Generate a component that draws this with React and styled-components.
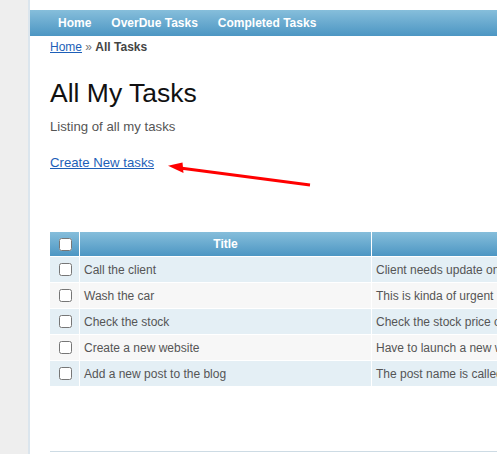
import React from "react";
import styled, { createGlobalStyle } from "styled-components";

const GlobalStyle = createGlobalStyle`
  html, body {
    margin: 0;
    padding: 0;
    overflow: hidden;
    background: #eeeeee;
    font-family: "Liberation Sans", Arial, sans-serif;
  }
`;

const Page = styled.div`
  position: relative;
  display: flex;
  width: 900px;
  min-height: 454px;
`;

const Sidebar = styled.div`
  width: 28px;
  flex: none;
  background: #eeeeee;
  border-right: 2px solid #dbe5ed;
`;

const Main = styled.div`
  flex: 1;
  background: #ffffff;
  padding-top: 10px;
`;

const NavBar = styled.nav`
  display: flex;
  height: 26px;
  padding-left: 18px;
  background: linear-gradient(to bottom, #86bedb, #4c96c3);
`;

const NavItem = styled.a`
  padding: 0 10px;
  line-height: 26px;
  color: #ffffff;
  font-weight: bold;
  font-size: 12px;
  text-decoration: none;
`;

const Content = styled.div`
  padding-left: 20px;
`;

const Breadcrumb = styled.div`
  margin-top: 4px;
  font-size: 12px;
  line-height: 14px;
  color: #777;
`;

const Link = styled.a`
  color: #1d5fb8;
  text-decoration: underline;
`;

const Current = styled.strong`
  color: #444;
`;

const Heading = styled.h1`
  margin: 24px 0 0;
  font-size: 26.5px;
  line-height: 30px;
  font-weight: normal;
  color: #111;
`;

const Lead = styled.p`
  margin: 11px 0 0;
  font-size: 13.2px;
  line-height: 15px;
  color: #555;
`;

const CreateLink = styled(Link)`
  display: inline-block;
  margin-top: 21px;
  font-size: 13.2px;
  line-height: 15px;
`;

const Table = styled.table`
  margin-top: 61px;
  border-collapse: separate;
  border-spacing: 0;
  font-size: 12px;
`;

const HeadCell = styled.th`
  height: 25px;
  padding: 0 4px;
  width: ${(p) => p.$w}px;
  background: linear-gradient(to bottom, #86bedb, #4c96c3);
  color: #fff;
  font-weight: bold;
  text-align: center;
  border-right: 1px solid #fff;
  border-bottom: 1px solid #fff;
  box-sizing: border-box;
`;

const Row = styled.tr`
  background: ${(p) => (p.$odd ? "#e4eff5" : "#f7f7f7")};
`;

const Cell = styled.td`
  height: 25px;
  padding: 0 4px;
  color: #555;
  white-space: nowrap;
  border-right: 1px solid #fff;
  border-bottom: 1px solid #fff;
  vertical-align: middle;
`;

const CheckCell = styled.td`
  width: 29px;
  padding: 0;
  height: 25px;
  border-right: 1px solid #fff;
  border-bottom: 1px solid #fff;
  vertical-align: middle;
`;

const CheckHead = styled(HeadCell)`
  width: 30px;
  padding: 0;
`;

const Check = styled.input.attrs({ type: "checkbox" })`
  display: block;
  width: 13px;
  height: 13px;
  margin: 0 0 0 9px;
`;

const Rule = styled.hr`
  margin: 64px 0 0;
  border: none;
  height: 1px;
  background: #cddbe4;
`;

const Arrow = styled.svg`
  position: absolute;
  left: 160px;
  top: 155px;
  width: 160px;
  height: 40px;
  overflow: visible;
`;

const tasks = [
  ["Call the client", "Client needs update on the project status"],
  ["Wash the car", "This is kinda of urgent"],
  ["Check the stock", "Check the stock price of the company"],
  ["Create a new website", "Have to launch a new website soon"],
  ["Add a new post to the blog", "The post name is called something"],
];

export default function App() {
  return (
    <>
      <GlobalStyle />
      <Page>
        <Sidebar />
        <Main>
          <NavBar>
            <NavItem href="#">Home</NavItem>
            <NavItem href="#">OverDue Tasks</NavItem>
            <NavItem href="#">Completed Tasks</NavItem>
          </NavBar>
          <Content>
            <Breadcrumb>
              <Link href="#">Home</Link> » <Current>All Tasks</Current>
            </Breadcrumb>
            <Heading>All My Tasks</Heading>
            <Lead>Listing of all my tasks</Lead>
            <CreateLink href="#">Create New tasks</CreateLink>
            <Table>
              <thead>
                <tr>
                  <CheckHead>
                    <Check />
                  </CheckHead>
                  <HeadCell $w={292}>Title</HeadCell>
                  <HeadCell $w={320}></HeadCell>
                </tr>
              </thead>
              <tbody>
                {tasks.map(([title, desc], i) => (
                  <Row key={title} $odd={i % 2 === 0}>
                    <CheckCell>
                      <Check />
                    </CheckCell>
                    <Cell>{title}</Cell>
                    <Cell>{desc}</Cell>
                  </Row>
                ))}
              </tbody>
            </Table>
            <Rule />
          </Content>
        </Main>
        <Arrow viewBox="0 0 160 40">
          <line x1="20" y1="13" x2="150" y2="30" stroke="#ff0000" strokeWidth="3" />
          <polygon points="8,10.7 22.5,7.5 23.5,18" fill="#ff0000" />
        </Arrow>
      </Page>
    </>
  );
}
